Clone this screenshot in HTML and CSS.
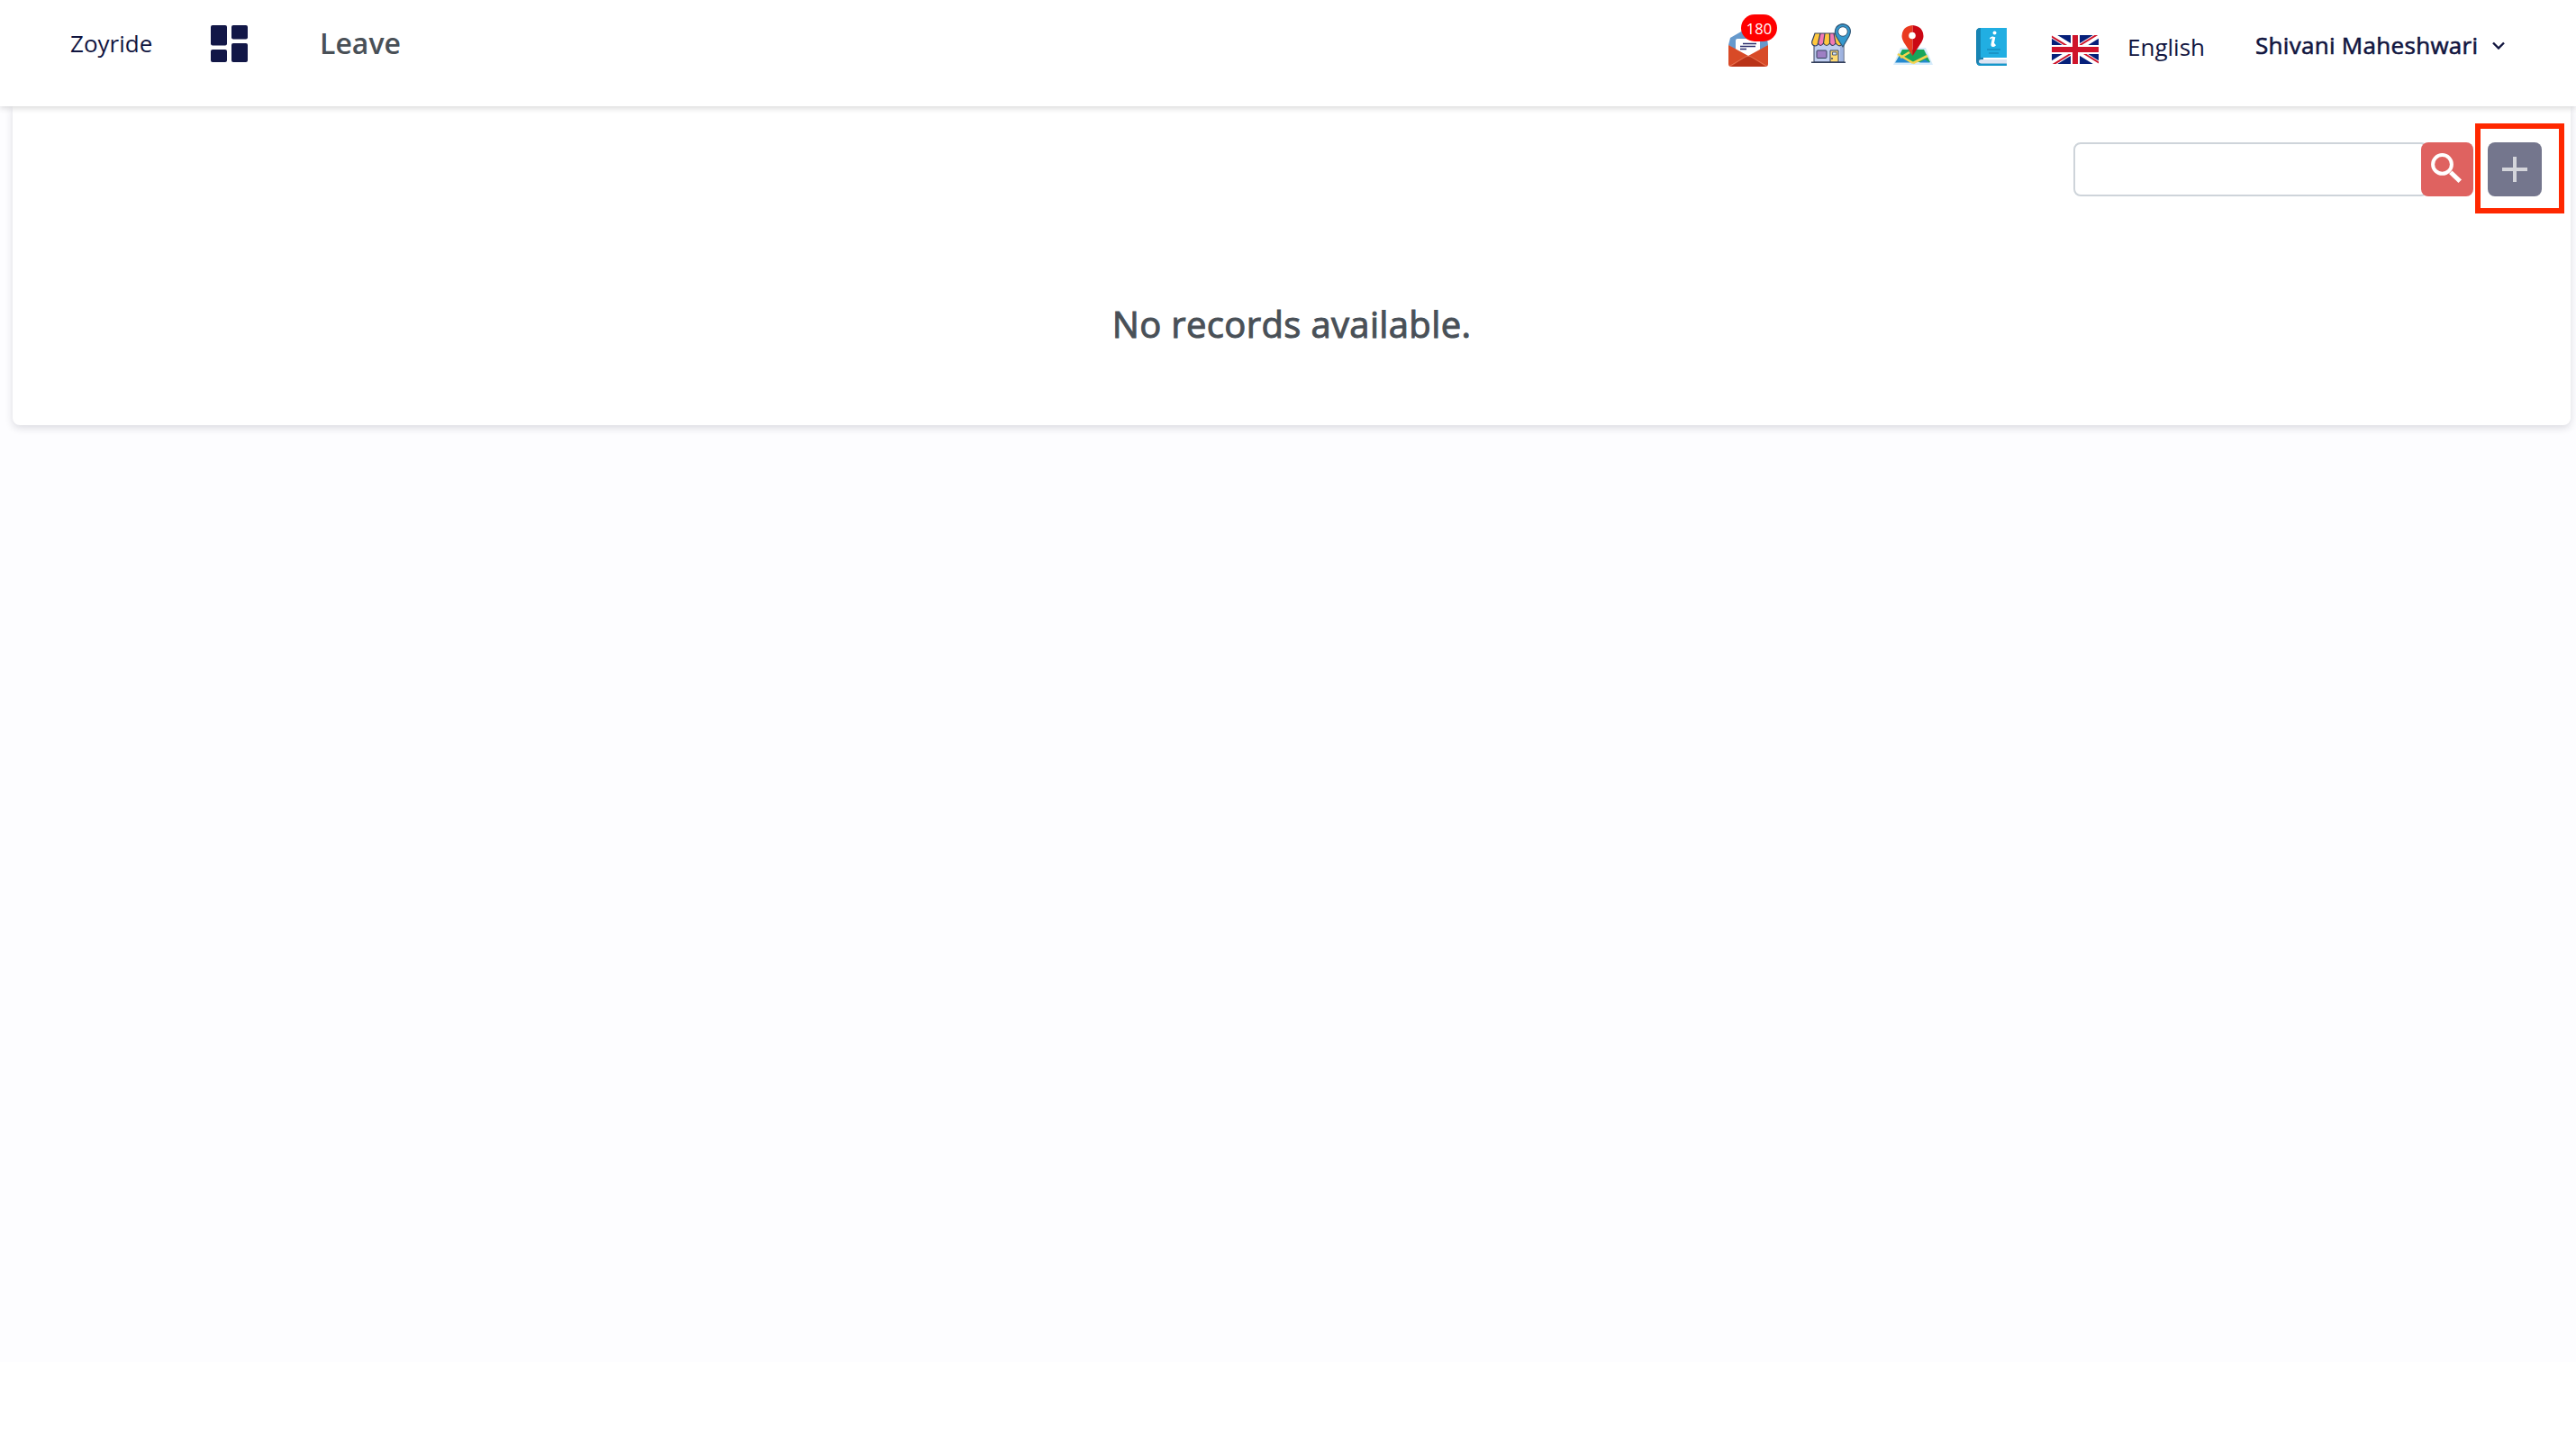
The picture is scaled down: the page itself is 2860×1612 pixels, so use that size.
FILE: index.html
```
<!DOCTYPE html>
<html lang="en">
<head>
  <meta charset="UTF-8">
  <title>Leave - Zoyride</title>
  <link rel="stylesheet" href="styles.css">
</head>
<body>
  <header class="header">
    <span class="brand">Zoyride</span>
    <svg class="dashboard" viewBox="0 0 41 41">
      <rect x="0" y="0" width="18" height="22.5" rx="2"/>
      <rect x="23" y="0" width="18" height="15.5" rx="2"/>
      <rect x="0" y="27" width="18" height="14" rx="2"/>
      <rect x="23" y="20" width="18" height="21" rx="2"/>
    </svg>
    <h1 class="title">Leave</h1>

    <div class="tools">
      <div class="mail">
        <svg class="mail-icon" viewBox="0 0 44 40">
          <path fill="#6699cc" d="M0 16 L2 8 L16 0 H29 L43 9 L44 16 L30 27 H14Z"/>
          <path fill="#fff" d="M8 11 Q8 9 10 9 H33 Q35 9 35 11 V24 L22 31 L8 23Z"/>
          <path stroke="#2b2d6b" stroke-width="1.3" d="M16 14.500H31M13 17.500H30M13 20.500H20"/>
          <path fill="#d84a27" d="M0 16 L22 28 L44 16 V37 Q44 40 41 40 H3 Q0 40 0 37Z"/>
          <path fill="#b93318" d="M3 40 L19 29 Q22 27.5 25 29 L41 40Z"/>
          <path fill="none" stroke="#e77b5c" stroke-width="0.8" d="M2 39 L19 29 Q22 27.5 25 29 L42 39"/>
        </svg>
        <span class="badge">180</span>
      </div>

      <svg class="store-icon" viewBox="0 0 44 44">
        <path fill="#bfcdf0" stroke="#34405c" stroke-width="1" d="M3 22H36V43H3Z"/>
        <path fill="#9fb3e0" d="M32 24h3.500v18h-3.500z"/>
        <path fill="#ffc83d" d="M4 11H10L7 23Q5 25 2 23.500Q0 22 1 20Z"/>
        <path fill="#f37ab5" d="M10 11H15L13.500 23Q10 27 7 22Z"/>
        <path fill="#ffc83d" d="M15 11H20.500V22Q17 27 13 22Z"/>
        <path fill="#f37ab5" d="M20.500 11H26L27 22Q24 27 20.500 22Z"/>
        <path fill="#ffc83d" d="M26 11H29L34 22Q30 27 27 22Z"/>
        <path fill="none" stroke="#34405c" stroke-width="1.200" d="M28 11H4L.8 20Q0 24 4 25Q7 25 7.500 22Q10 27 13.500 22Q17 27 20.500 22Q24 27 27 22Q31 27 34 23M10 11L7.500 22M15 11L13.500 22M20.500 11V22M25 11L27 22"/>
        <rect x="6" y="30" width="11" height="8.500" rx="1" fill="#9e7fc4" stroke="#34405c"/>
        <path fill="#ffda72" stroke="#34405c" d="M21 43V30H30V43Z"/>
        <path fill="#d9e8fb" stroke="#34405c" stroke-width=".8" d="M23.500 32H28V35H23.500Z"/>
        <path stroke="#34405c" stroke-width="1.400" d="M0 43.300H38M23 38V40"/>
        <path fill="#3599ce" stroke="#315777" stroke-width="1.200" d="M35 26Q31 20 27.500 14Q25 8 28 4Q31 .6 35 .6Q40 1 42.500 5Q44.500 9 42 14Q38 21 35 26Z"/>
        <circle cx="35" cy="9" r="5.300" fill="#fff" stroke="#315777" stroke-width="1"/>
      </svg>

      <svg class="map-icon" viewBox="0 0 44 44">
        <path fill="#d5ebfb" d="M8 25H36L44 44H0Z"/>
        <path fill="#18a65a" d="M10 27H34L41 41H3Z"/>
        <path fill="#2489d0" d="M7 34L19 41.500H2Z"/>
        <path fill="#2489d0" d="M35 38L41 41.500H29Z"/>
        <path fill="none" stroke="#f4d34e" stroke-width="2.600" d="M5 32L22 42M8 36L18 30M22 42L38 34"/>
        <path fill="#ea3a1f" d="M21.500 34L13 21Q9.500 16 9.500 12Q10 1 21.500 0Z"/>
        <path fill="#cb0714" d="M21.500 34L30 21Q33.500 16 33.500 12Q33 1 21.500 0Z"/>
        <circle cx="21" cy="11.500" r="3.800" fill="#fff"/>
      </svg>

      <svg class="book-icon" viewBox="0 0 34 42">
        <path fill="#1e7fad" d="M5 0H8V36H34V42H5Q0 42 0 37V5Q0 0 5 0Z"/>
        <path fill="#21aee2" d="M5 0H34V33H5Z"/>
        <path fill="#1784b3" d="M5 0V33Q2 33 0 36V5Q0 0 5 0Z"/>
        <path fill="#dce4f3" d="M34 35H6Q3 35 3 37.300T6 39.700H34Z"/>
        <path fill="#1597cb" d="M5 39.700H34V42H5Q2 42 1 39Z"/>
        <path stroke="#147dac" stroke-width="1.200" d="M12 24H27M14 28H25"/>
        <circle cx="20.500" cy="5.500" r="2" fill="#fff"/>
        <path fill="none" stroke="#fff" stroke-width="1.700" stroke-linecap="round" d="M16 11.500Q17 10 19 10.500"/>
        <path fill="none" stroke="#fff" stroke-width="3.200" stroke-linejoin="round" d="M19.800 10L18 18.500Q18 20 19.500 19.300L21 18"/>
      </svg>

      <svg class="flag" viewBox="0 0 52 32">
        <path fill="#06207a" d="M0 0H52V32H0Z"/>
        <path stroke="#fff" stroke-width="6.500" d="M0 0L52 32M52 0L0 32"/>
        <path fill="none" stroke="#cf142b" stroke-width="2" d="M-1 1L25 17M53 31L27 15M51 -1L25 15M1 33L27 17"/>
        <path stroke="#fff" stroke-width="10" d="M26 0V32M0 16H52"/>
        <path stroke="#cf142b" stroke-width="6" d="M26 0V32M0 16H52"/>
      </svg>
      <span class="language">English</span>

      <div class="user">
        <span class="user-name">Shivani Maheshwari</span>
        <svg class="chevron" viewBox="0 0 14 9"><path d="M1 1.500L7 7.500L13 1.500"/></svg>
      </div>
    </div>
  </header>

  <main class="content">
    <section class="card">
      <div class="toolbar">
        <input class="search-input" type="text">
        <button class="search-btn" type="button">
          <svg viewBox="0 0 34 33">
            <circle cx="12.500" cy="12.400" r="10.400"/>
            <path class="handle" d="M20 23L23.500 19.500L34 29.500L30.500 33Z"/>
          </svg>
        </button>
        <div class="add-highlight">
          <button class="add-btn" type="button">
            <svg viewBox="0 0 28 28"><path d="M0 14H28M14 0V28"/></svg>
          </button>
        </div>
      </div>
      <p class="empty">No records available.</p>
    </section>
  </main>
</body>
</html>
```
FILE: styles.css
```
* {
  box-sizing: border-box;
}
body {
  margin: 0;
  background: #fff;
  font-family: "Open Sans", sans-serif;
  color: #11153f;
}
svg {
  display: block;
  flex: none;
}
button {
  display: flex;
  align-items: center;
  justify-content: center;
  border: none;
  padding: 0;
}

/* header */
.header {
  position: relative;
  z-index: 1;
  display: flex;
  align-items: flex-start;
  height: 118px;
  padding-left: 78px;
  background: #fff;
  box-shadow: 0 2px 7px rgba(0,0,0,0.16);
}
.brand {
  width: 156px;
  margin-top: 30px;
  font-size: 26px;
  line-height: 36px;
}
.dashboard {
  width: 41px;
  height: 41px;
  margin-top: 28px;
  fill: #121747;
}
.title {
  margin: 26px 0 0 80px;
  font-size: 32px;
  line-height: 44px;
  font-weight: 600;
  color: #495057;
}
.tools {
  display: flex;
  align-items: flex-start;
  margin-left: auto;
  padding-right: 79px;
}
.mail {
  position: relative;
  margin: 34px 48px 0 0;
}
.mail-icon {
  width: 44px;
  height: 40px;
}
.badge {
  position: absolute;
  left: 14px;
  top: -18px;
  width: 40px;
  height: 30px;
  border-radius: 15px;
  background: #f00;
  color: #fff;
  font-size: 16.5px;
  line-height: 31px;
  text-align: center;
}
.store-icon {
  width: 44px;
  height: 44px;
  margin: 26px 47px 0 0;
}
.map-icon {
  width: 44px;
  height: 44px;
  margin: 28px 48px 0 0;
}
.book-icon {
  width: 34px;
  height: 42px;
  margin: 31px 50px 0 0;
}
.flag {
  width: 52px;
  height: 32px;
  margin-top: 39px;
}
.language {
  width: 142px;
  margin: 34px 0 0 32px;
  font-size: 26px;
  line-height: 36px;
}
.user {
  display: flex;
  align-items: center;
  justify-content: space-between;
  width: 277px;
  margin-top: 32px;
}
.user-name {
  font-size: 26px;
  line-height: 36px;
  letter-spacing: 0.3px;
  white-space: nowrap;
  -webkit-text-stroke: 0.6px #11153f;
}
.chevron {
  width: 14px;
  height: 9px;
}
.chevron path {
  fill: none;
  stroke: #11153f;
  stroke-width: 2.4;
}

/* content */
.content {
  height: 1394px;
  padding: 0 6px 0 14px;
  background: #fdfdff;
}
.card {
  height: 354px;
  padding-top: 19px;
  background: #fff;
  border-radius: 0 0 8px 8px;
  box-shadow: 0 3px 8px rgba(40,40,60,0.16);
}
.toolbar {
  display: flex;
  align-items: flex-start;
  justify-content: flex-end;
  padding-right: 7px;
}
.search-input {
  width: 394px;
  height: 60px;
  margin: 21px -8px 0 0;
  border: 2px solid #ced4da;
  border-radius: 8px;
  background: #fff;
}
.search-btn {
  position: relative;
  width: 58px;
  height: 60px;
  margin: 21px 2px 0 0;
  border-radius: 8px;
  background: #df6260;
}
.search-btn svg {
  width: 34px;
  height: 33px;
  margin: 0 2px 3px 0;
}
.search-btn circle {
  fill: none;
  stroke: #fff;
  stroke-width: 4;
}
.handle {
  fill: #fff;
}
.add-highlight {
  width: 99px;
  height: 100px;
  padding: 15px 0 0 8px;
  border: 6px solid #ff2800;
}
.add-btn {
  width: 60px;
  height: 60px;
  border-radius: 8px;
  background: #74768d;
}
.add-btn svg {
  width: 28px;
  height: 28px;
}
.add-btn path {
  stroke: #d4d5db;
  stroke-width: 4;
}
.empty {
  margin: 95px 0 0;
  font-size: 40px;
  line-height: 56px;
  letter-spacing: 0.35px;
  text-align: center;
  color: #495057;
  -webkit-text-stroke: 1px #495057;
}
```
